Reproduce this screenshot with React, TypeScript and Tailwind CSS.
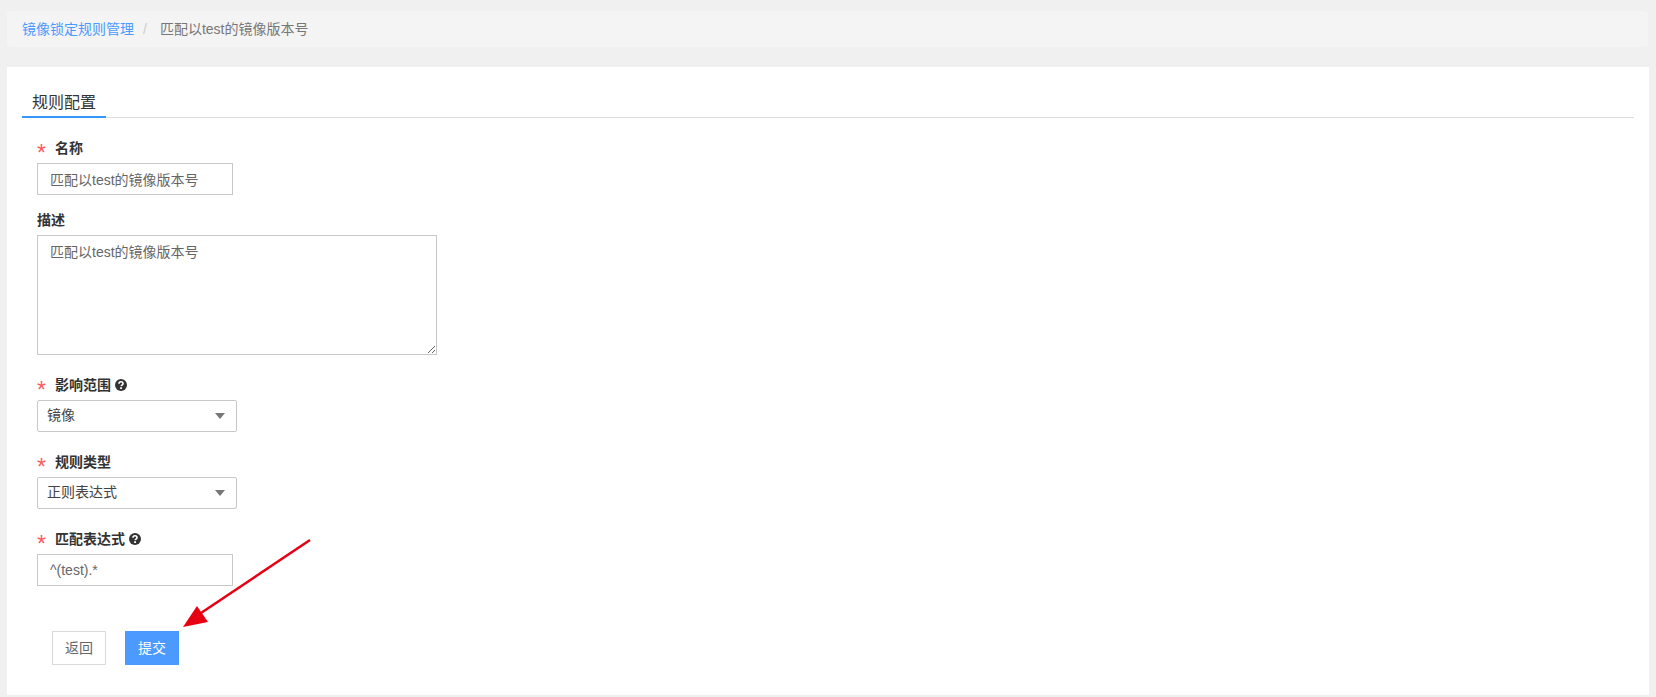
import React from "react";

const HelpIcon = () => (
  <svg viewBox="0 0 24 24" className="ml-[4px] h-[12px] w-[12px]" fill="none">
    <circle cx="12" cy="12" r="12" fill="#333" />
    <path d="M8 9.5a4 4 0 0 1 8 0c0 2.6-3.2 2.8-3.6 4.8" stroke="#fff" strokeWidth="3.2" fill="none" />
    <rect x="10.3" y="16.4" width="3.6" height="3.6" fill="#fff" />
  </svg>
);

const Label = ({ text, required, help }: { text: string; required?: boolean; help?: boolean }) => (
  <div className="mb-[5px] flex h-[20px] items-center text-[14px] font-bold text-[#333]">
    {required && <span className="mr-[10px] h-[20px] w-[8px] pt-[5px] text-[23px] font-normal leading-[20px] text-[#ff5a5f]">*</span>}
    <span>{text}</span>
    {help && <HelpIcon />}
  </div>
);

const Select = ({ value }: { value: string }) => (
  <div className="flex h-[32px] w-[200px] items-center justify-between rounded-[2px] border border-[#c8c8c8] bg-white pb-[1px] pl-[9px] pr-[11px] text-[14px] text-[#444]">
    <span>{value}</span>
    <span className="h-0 w-0 border-x-[5px] border-t-[6px] border-x-transparent border-t-[#777]" />
  </div>
);

const App = () => {
  const fontStack = "font-['Liberation_Sans','Noto_Sans_CJK_SC',sans-serif]";
  return (
    <div className={`relative h-[697px] w-full overflow-hidden bg-[#f0f0f0] px-[7px] pt-[11px] ${fontStack}`}>
      {/* Breadcrumb */}
      <div className="flex h-[36px] w-[1641px] items-center rounded-[4px] bg-[#f4f4f4] px-[15px] text-[14px]">
        <span className="text-[#4c9aff]">镜像锁定规则管理</span>
        <span className="ml-[9px] mr-[13px] text-[#ccc]">/</span>
        <span className="text-[#777]">匹配以test的镜像版本号</span>
      </div>

      {/* Card */}
      <div className="mt-[20px] h-[628px] w-[1642px] bg-white px-[15px]">
        <div className="flex h-[51px] w-[1612px] items-end border-b border-[#ddd]">
          <div className="-mb-[1px] w-[84px] border-b-2 border-[#3296fa] pb-[1px] text-center text-[16px] leading-[24px] text-[#333]">规则配置</div>
        </div>

        <div className="pl-[15px] pt-[20px]">
          <Label text="名称" required />
          <input
            readOnly
            value="匹配以test的镜像版本号"
            className="block h-[32px] w-[196px] border border-[#c8c8c8] pb-[1px] pl-[12px] pr-[13px] text-[14px] text-[#666] outline-none"
          />

          <div className="mt-[15px]">
            <Label text="描述" />
          </div>
          <textarea
            readOnly
            value="匹配以test的镜像版本号"
            className="block h-[120px] w-[400px] border border-[#c8c8c8] py-[6px] pl-[12px] pr-[13px] text-[14px] leading-[20px] text-[#666] outline-none"
          />

          <div className="mt-[20px]">
            <Label text="影响范围" required help />
          </div>
          <Select value="镜像" />

          <div className="mt-[20px]">
            <Label text="规则类型" required />
          </div>
          <Select value="正则表达式" />

          <div className="mt-[20px]">
            <Label text="匹配表达式" required help />
          </div>
          <input
            readOnly
            value="^(test).*"
            className="block h-[32px] w-[196px] border border-[#c8c8c8] pb-[1px] pl-[12px] pr-[13px] text-[14px] text-[#666] outline-none"
          />

          <div className="ml-[15px] mt-[45px] flex gap-[19px]">
            <button className="h-[34px] w-[54px] border border-[#d9d9d9] bg-white text-[14px] text-[#666]">返回</button>
            <button className="h-[34px] w-[54px] bg-[#4c9aff] text-[14px] text-white">提交</button>
          </div>
        </div>
      </div>

      {/* Red annotation arrow */}
      <svg className="absolute left-0 top-0" width="400" height="697" fill="none">
        <line x1="310" y1="540" x2="198" y2="615" stroke="#e60012" strokeWidth="2.5" />
        <polygon points="183,627 197,606 208,622" fill="#e60012" />
      </svg>
    </div>
  );
};

export default App;
